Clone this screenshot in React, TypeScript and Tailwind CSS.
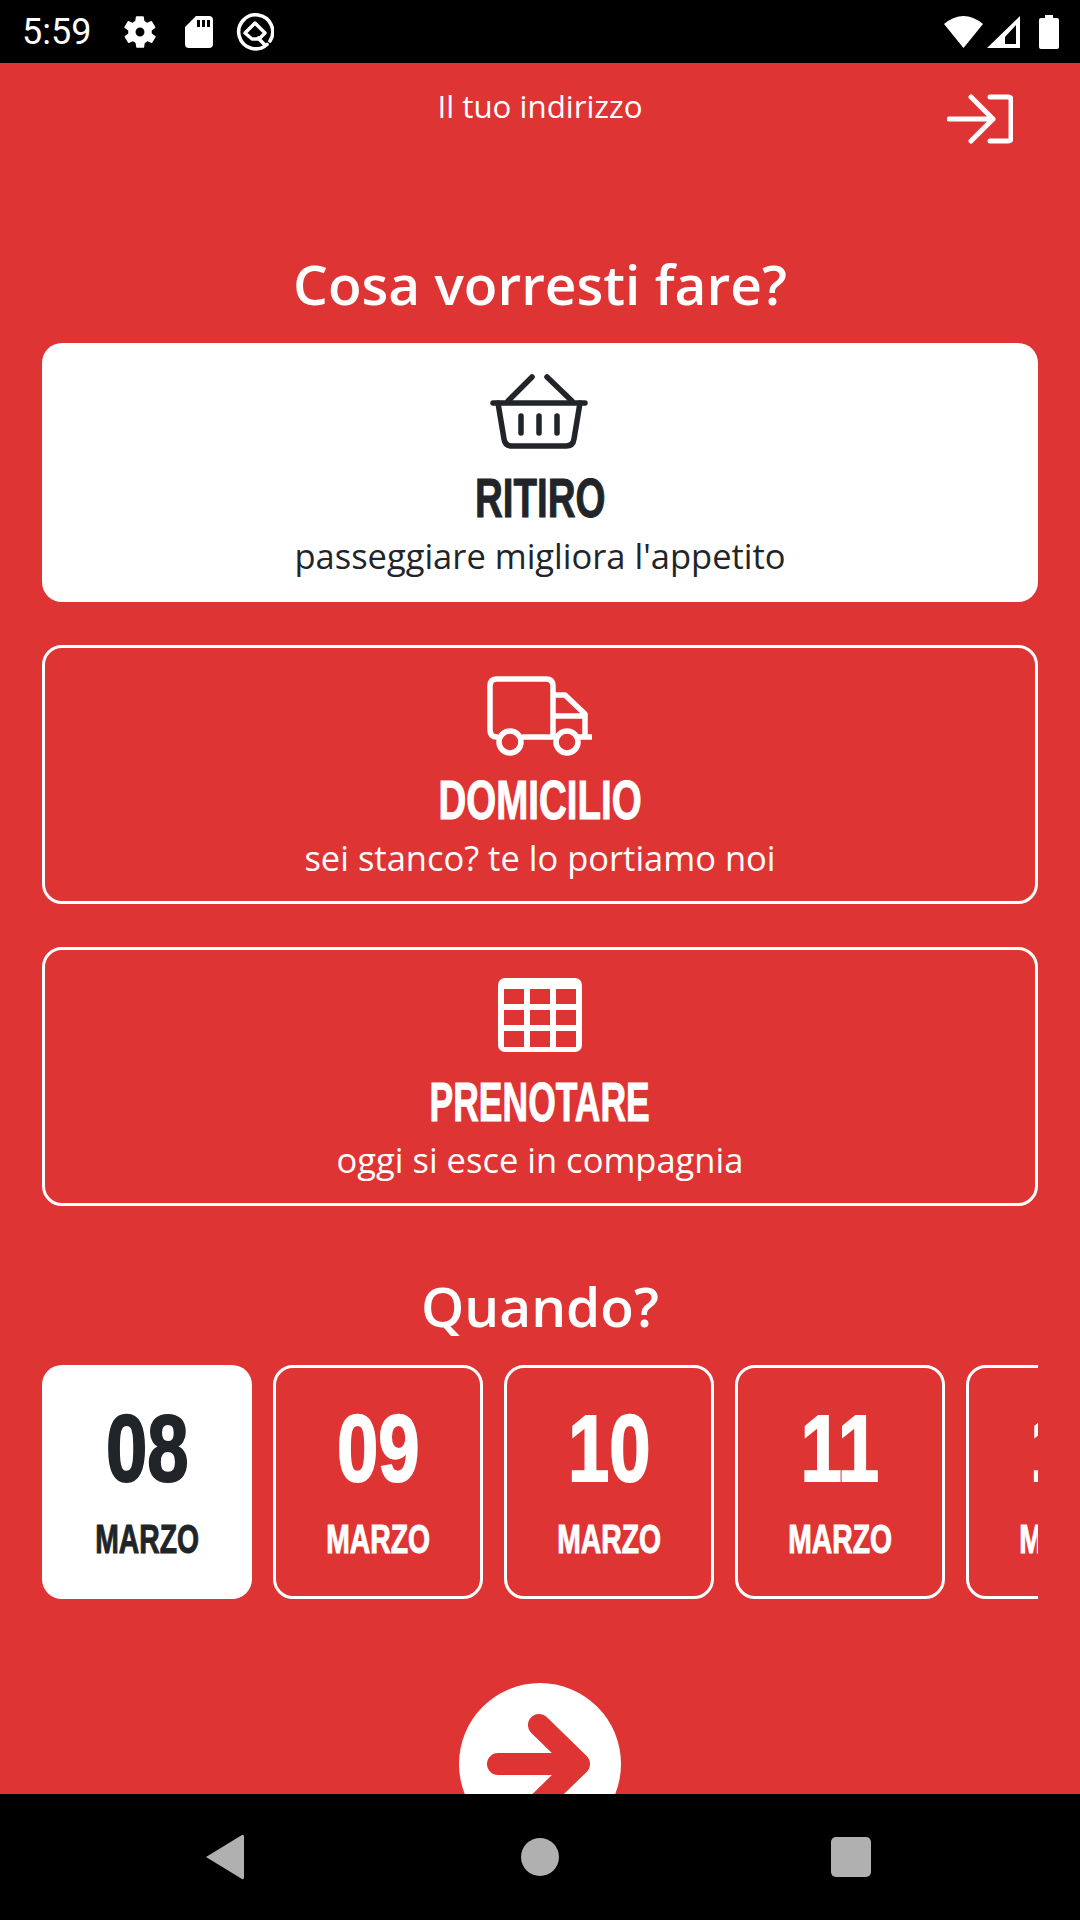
import React from "react";

const condensed = "font-['Liberation_Sans',sans-serif] font-bold whitespace-nowrap";

function Basket() {
  return (
    <svg viewBox="0 0 110 80" className="w-[110px] h-20 overflow-visible" fill="none" stroke="currentColor" strokeWidth="5.5" strokeLinecap="round" strokeLinejoin="round">
      <path d="M8 31H100" />
      <path d="M13 31L19 67Q20 74 27 74H81Q88 74 89 67L95 31" />
      <path d="M23 29L47 5M62 5L87 29" />
      <path d="M36 44V61M54 44V61M72 44V61" />
    </svg>
  );
}

function Truck() {
  return (
    <svg viewBox="0 0 110 80" className="w-[110px] h-20 overflow-visible" fill="none" stroke="currentColor" strokeWidth="5.5" strokeLinejoin="round">
      <path d="M13 63H12Q5 63 5 56V12Q5 5 12 5H61Q68 5 68 12V63H37M68 63H71" />
      <path d="M68 21H80L100 40V63M68 42H100M93 63H107" />
      <circle cx="25" cy="68" r="11" />
      <circle cx="82" cy="68" r="11" />
    </svg>
  );
}

function CalendarGrid() {
  return (
    <svg viewBox="0 0 110 80" className="w-[110px] h-20 overflow-visible" fill="none">
      <rect x="13" y="2" width="84" height="74" rx="7" fill="currentColor" />
      <g fill="#df3434">
        <rect x="19" y="13" width="20" height="15" />
        <rect x="45" y="13" width="20" height="15" />
        <rect x="71" y="13" width="20" height="15" />
        <rect x="19" y="34" width="20" height="15" />
        <rect x="45" y="34" width="20" height="15" />
        <rect x="71" y="34" width="20" height="15" />
        <rect x="19" y="55" width="20" height="16" />
        <rect x="45" y="55" width="20" height="16" />
        <rect x="71" y="55" width="20" height="16" />
      </g>
    </svg>
  );
}

type Service = { title: string; note: string; squeeze: string; active?: boolean; icon: React.ReactNode };

const services: Service[] = [
  { title: "RITIRO", note: "passeggiare migliora l'appetito", squeeze: "scale-x-[0.7]", active: true, icon: <Basket /> },
  { title: "DOMICILIO", note: "sei stanco? te lo portiamo noi", squeeze: "scale-x-[0.7]", icon: <Truck /> },
  { title: "PRENOTARE", note: "oggi si esce in compagnia", squeeze: "scale-x-[0.645]", icon: <CalendarGrid /> },
];

const days = ["08", "09", "10", "11", "12"];

function StatusBar() {
  return (
    <div className="h-[63px] shrink-0 bg-black flex items-center text-white pl-[22px] pr-[21px]">
      <span className="font-['Roboto',sans-serif] text-[36px] leading-none w-[100px]">5:59</span>
      <svg viewBox="0 0 24 24" className="w-[38px] h-[38px] ml-[-1px]" fill="currentColor">
        <path d="M19.4 13a7.5 7.5 0 0 0 0-2l2.1-1.6a.5.5 0 0 0 .1-.7l-2-3.4a.5.5 0 0 0-.6-.2l-2.5 1a7.3 7.3 0 0 0-1.7-1l-.4-2.6a.5.5 0 0 0-.5-.5h-4a.5.5 0 0 0-.5.4l-.4 2.7a7.6 7.6 0 0 0-1.7 1l-2.5-1a.5.5 0 0 0-.6.2l-2 3.4a.5.5 0 0 0 .1.7L4.6 11a7.5 7.5 0 0 0 0 2l-2.1 1.6a.5.5 0 0 0-.1.7l2 3.4c.1.2.4.3.6.2l2.5-1c.5.4 1.1.7 1.7 1l.4 2.6c0 .3.2.5.5.5h4c.3 0 .5-.2.5-.4l.4-2.7a7.6 7.6 0 0 0 1.7-1l2.5 1c.2.1.5 0 .6-.2l2-3.4a.5.5 0 0 0-.1-.7zM12 14.8a2.8 2.8 0 1 1 0-5.6 2.8 2.8 0 0 1 0 5.6z" />
      </svg>
      <svg viewBox="0 0 28 32" className="w-[28px] h-[32px] ml-[26px]" fill="currentColor">
        <path fillRule="evenodd" d="M11 0H24Q28 0 28 4V28Q28 32 24 32H4Q0 32 0 28V11zM12 4V11H15V4zM17 4V11H20V4zM22 4V11H25V4z" />
      </svg>
      <svg viewBox="0 0 38 38" className="w-[38px] h-[38px] ml-[23px]" fill="none" stroke="currentColor" strokeWidth="3.6">
        <path d="M31 31.5A17 17 0 1 1 34 28" strokeLinecap="round" />
        <path d="M9 20L19 10L29 20L23 26H16z" strokeWidth="3.4" strokeLinejoin="round" />
        <path d="M21 24L30 33" />
      </svg>
      <div className="flex-1" />
      <svg viewBox="0 0 39 32" className="w-[39px] h-[32px]" fill="currentColor">
        <path d="M0 8Q19.5 -8 39 8L19.5 32z" />
      </svg>
      <svg viewBox="0 0 33 32" className="w-[33px] h-[32px] ml-[4px]" fill="none">
        <path fillRule="evenodd" fill="white" d="M33 0V32H0zM29 9L18 21V28H29z" />
      </svg>
      <svg viewBox="0 0 20 34" className="w-[20px] h-[34px] ml-[19px]" fill="currentColor">
        <path d="M6 0H14V3H18Q20 3 20 5V32Q20 34 18 34H2Q0 34 0 32V5Q0 3 2 3H6z" />
      </svg>
    </div>
  );
}

function ServiceCard({ title, note, squeeze, active, icon }: Service) {
  return (
    <div className={`h-[259px] rounded-[20px] flex flex-col items-center ${active ? "bg-white text-[#212529] pt-[29px]" : "border-[3px] border-white text-white pt-[26px]"}`}>
      {icon}
      <div className={`${condensed} ${squeeze} mt-4 h-[60px] flex items-center text-[55px] leading-none [-webkit-text-stroke:1px_currentColor]`}>{title}</div>
      <div className="h-[56px] flex items-center font-['Open_Sans',sans-serif] text-[34.5px] leading-none">{note}</div>
    </div>
  );
}

function DayCard({ day, active }: { day: string; active: boolean }) {
  return (
    <div className={`w-[210px] h-[234px] shrink-0 rounded-[20px] flex flex-col items-center ${active ? "bg-white text-[#212529] pt-[25px]" : "border-[3px] border-white text-white pt-[22px]"}`}>
      <div className={`${condensed} scale-x-[0.79] h-[118px] flex items-center text-[94px] leading-none [-webkit-text-stroke:2px_currentColor]`}>{day}</div>
      <div className={`${condensed} scale-x-[0.69] h-[46px] mt-[8px] flex items-center text-[41px] leading-none [-webkit-text-stroke:1px_currentColor]`}>MARZO</div>
    </div>
  );
}

export default function App() {
  return (
    <div className="w-[1080px] h-[1920px] flex flex-col overflow-hidden bg-[#df3434] text-white">
      <StatusBar />
      <main className="flex-1 min-h-0 overflow-hidden flex flex-col">
        <header className="relative shrink-0 h-[86px] flex items-center justify-center font-['Open_Sans',sans-serif] text-[31.3px]">
          Il tuo indirizzo
          <svg viewBox="0 0 66 50" className="absolute right-[67px] top-[31px] w-[66px] h-[50px]" fill="none" stroke="currentColor" strokeWidth="5" strokeLinecap="round" strokeLinejoin="round">
            <path d="M43 3H61Q64 3 64 6V44Q64 47 61 47H43" />
            <path d="M2 25H46M24 3L46 25L24 47" />
          </svg>
        </header>
        <h1 className="shrink-0 mt-[93px] text-center font-['Open_Sans',sans-serif] font-semibold text-[55px] leading-[84px]">Cosa vorresti fare?</h1>
        <div className="shrink-0 mx-[42px] mt-[17px] flex flex-col gap-[43px]">
          {services.map((s) => (
            <ServiceCard key={s.title} {...s} />
          ))}
        </div>
        <h2 className="shrink-0 mt-[66px] text-center font-['Open_Sans',sans-serif] font-semibold text-[55px] leading-[68px]">Quando?</h2>
        <div className="shrink-0 mx-[42px] mt-[25px] flex gap-[21px] overflow-hidden">
          {days.map((d, i) => (
            <DayCard key={d} day={d} active={i === 0} />
          ))}
        </div>
        <div className="relative mt-[84px] mx-auto w-[162px] h-[162px] shrink-0 rounded-full bg-white">
          <svg viewBox="0 0 162 162" className="w-[162px] h-[162px]" fill="none" stroke="#df3434" strokeWidth="22" strokeLinecap="round" strokeLinejoin="round">
            <path d="M39 81H115M80 42L120 81L80 120" />
          </svg>
        </div>
      </main>
      <nav className="h-[126px] shrink-0 bg-black flex items-center pb-[1px]">
        <div className="w-[360px] flex justify-center pl-[90px]">
          <svg viewBox="0 0 38 46" className="w-[38px] h-[46px]" fill="#b0b0b0">
            <path d="M0 23L36 1Q38 0 38 3V43Q38 46 36 45z" />
          </svg>
        </div>
        <div className="w-[360px] flex justify-center">
          <div className="w-[38px] h-[38px] rounded-full bg-[#b0b0b0]" />
        </div>
        <div className="w-[360px] flex justify-center pr-[98px]">
          <div className="w-[40px] h-[40px] rounded-[5px] bg-[#b0b0b0]" />
        </div>
      </nav>
    </div>
  );
}
